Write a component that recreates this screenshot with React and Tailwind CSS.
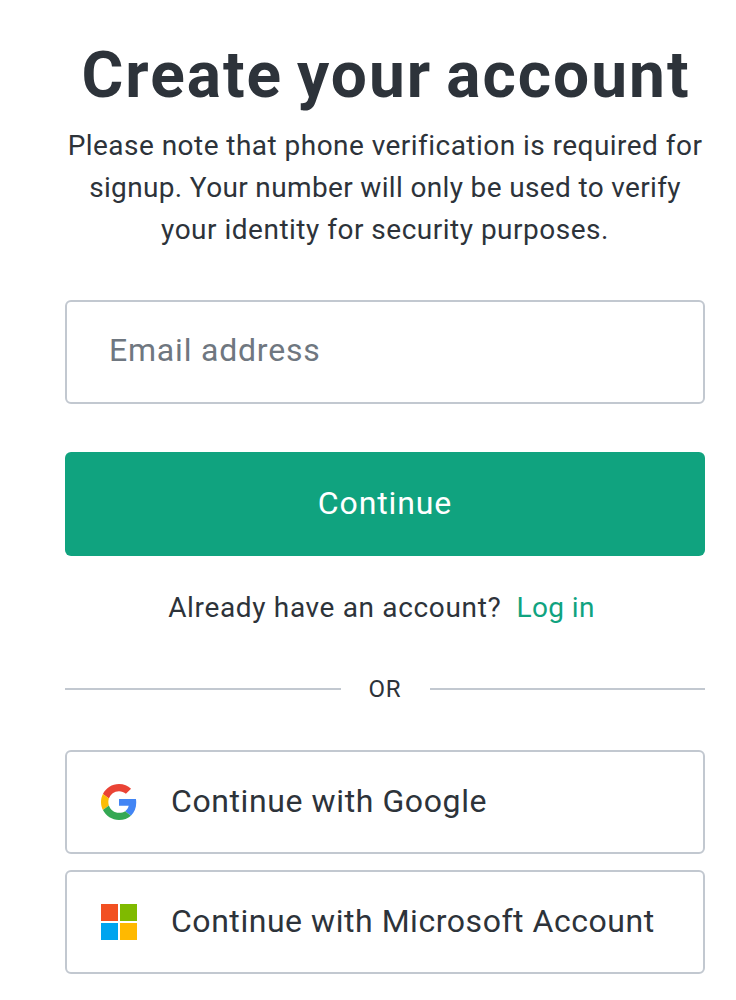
import { useState } from 'react';

function GoogleLogo() {
  return (
    <svg viewBox="0 0 48 48" className="size-9 shrink-0" aria-hidden="true">
      <path fill="#ea4335" d="M24 9.5c3.54 0 6.71 1.22 9.21 3.6l6.85-6.85C35.9 2.38 30.47 0 24 0 14.62 0 6.51 5.38 2.56 13.22l7.98 6.19C12.43 13.72 17.74 9.5 24 9.5z" />
      <path fill="#4285f4" d="M46.98 24.55c0-1.57-.15-3.09-.38-4.55H24v9.02h12.94c-.58 2.96-2.26 5.48-4.78 7.18l7.73 6c4.51-4.18 7.09-10.36 7.09-17.65z" />
      <path fill="#fbbc05" d="M10.53 28.59c-.48-1.45-.76-2.99-.76-4.59s.27-3.14.76-4.59l-7.98-6.19C.92 16.46 0 20.12 0 24c0 3.88.92 7.54 2.56 10.78l7.97-6.19z" />
      <path fill="#34a853" d="M24 48c6.48 0 11.93-2.13 15.89-5.81l-7.73-6c-2.15 1.45-4.92 2.3-8.16 2.3-6.26 0-11.57-4.22-13.47-9.91l-7.98 6.19C6.51 42.62 14.62 48 24 48z" />
    </svg>
  );
}

function MicrosoftLogo() {
  return (
    <svg viewBox="0 0 36 36" className="size-9 shrink-0" aria-hidden="true">
      <path fill="#f25022" d="M0 0h17v17H0z" />
      <path fill="#7fba00" d="M19 0h17v17H19z" />
      <path fill="#00a4ef" d="M0 19h17v17H0z" />
      <path fill="#ffb900" d="M19 19h17v17H19z" />
    </svg>
  );
}

const providers = [
  { name: 'Google', label: 'Continue with Google', Logo: GoogleLogo, spacing: 'tracking-[0.6px]' },
  { name: 'Microsoft', label: 'Continue with Microsoft Account', Logo: MicrosoftLogo, spacing: 'tracking-[0.54px]' },
];

export default function App() {
  const [email, setEmail] = useState('');

  return (
    <main className="min-h-[1000px] w-[736px] bg-white pl-[65px] pr-[31px] pt-[37px] font-['Roboto',sans-serif] text-[#2d333a]">
      <header className="text-center">
        <h1 className="whitespace-nowrap pl-0.5 text-[64px] font-bold leading-[77px] tracking-[2px] [word-spacing:-4px]">
          Create your account
        </h1>
        <p className="mt-[11px] text-[28px] leading-[42px]">
          <span className="block whitespace-nowrap tracking-[0.46px]">Please note that phone verification is required for</span>
          <span className="block whitespace-nowrap tracking-[0.35px]">signup. Your number will only be used to verify</span>
          <span className="block whitespace-nowrap tracking-[0.5px]">your identity for security purposes.</span>
        </p>
      </header>

      <form className="mt-[49px]" onSubmit={(e) => e.preventDefault()}>
        <input
          type="email"
          value={email}
          onChange={(e) => setEmail(e.target.value)}
          placeholder="Email address"
          className="block h-[104px] w-full rounded-md border-2 border-[#c2c8d0] px-[42px] pb-1 text-[32px] tracking-[0.8px] outline-none placeholder:text-[#6f7780]"
        />
        <button
          type="submit"
          className="mt-12 block h-[104px] w-full rounded-md bg-[#10a37f] pb-0.5 text-[32px] tracking-[0.9px] text-white"
        >
          Continue
        </button>
      </form>

      <p className="mt-[31px] flex justify-center gap-[15px] pr-[7px] text-[28px] leading-[42px]">
        <span className="tracking-[0.66px]">Already have an account?</span>
        <a href="#" className="tracking-[0.4px] text-[#10a37f]">Log in</a>
      </p>

      <div className="mt-10 flex h-10 items-center">
        <div className="h-0.5 flex-1 bg-[#c2c8d0]" />
        <span className="w-[89px] text-center text-2xl tracking-[0.8px]">OR</span>
        <div className="h-0.5 flex-1 bg-[#c2c8d0]" />
      </div>

      <div className="mt-[41px] flex flex-col gap-4">
        {providers.map(({ name, label, Logo, spacing }) => (
          <button
            key={name}
            type="button"
            className="flex h-[104px] w-full items-center gap-[34px] rounded-md border-2 border-[#c2c8d0] px-[34px] text-left"
          >
            <Logo />
            <span className={`whitespace-nowrap pb-0.5 text-[32px] ${spacing}`}>{label}</span>
          </button>
        ))}
      </div>
    </main>
  );
}
